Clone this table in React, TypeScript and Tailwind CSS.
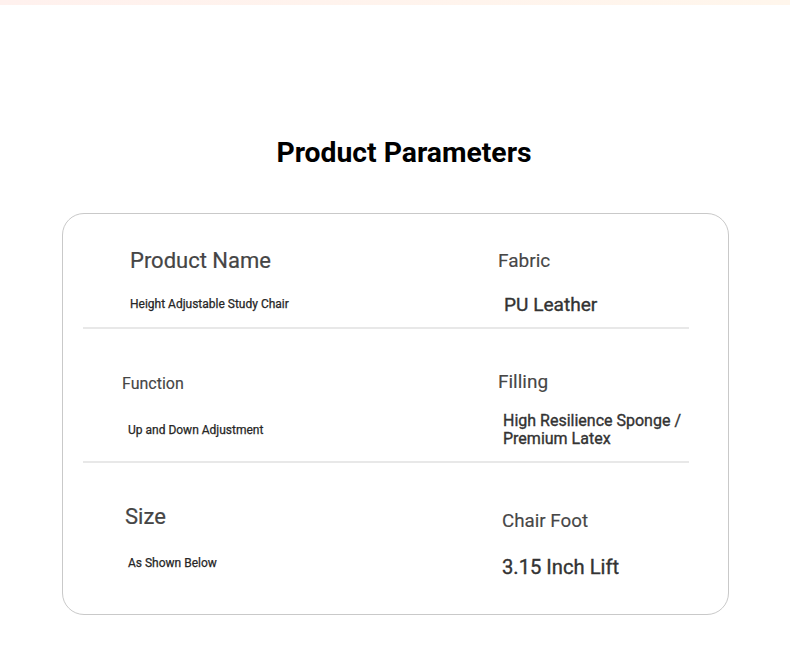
const App = () => {
    return (
        <div className="w-[790px] h-[649px] bg-white overflow-hidden font-['Roboto',_'Liberation_Sans',_sans-serif]">
            {/* faixa no topo */}
            <div className="h-[5px] w-full bg-gradient-to-r from-[#fff1ee] to-[#fff6ec]" />

            <h1 className="mt-[134px] text-center text-[28.3px] leading-[28px] font-bold text-black pl-[18px]">
                Product Parameters
            </h1>

            <div className="mt-[46px] ml-[62px] w-[667px] h-[402px] border border-[#c9c9c9] rounded-[22px] pl-[20px] flex flex-col">

                {/* linha 1 */}
                <div className="h-[113px] grid grid-cols-[415px_1fr]">
                    <div className="flex flex-col items-start">
                        <p className="mt-[36px] ml-[47px] text-[22px] leading-none text-[#454545] [-webkit-text-stroke:0.2px_#454545]">Product Name</p>
                        <p className="mt-[26px] ml-[47px] text-[12px] leading-none text-[#262626] [-webkit-text-stroke:0.25px_#262626]">Height Adjustable Study Chair</p>
                    </div>
                    <div className="flex flex-col items-start">
                        <p className="mt-[37px] ml-0 text-[19px] leading-none text-[#474747] [-webkit-text-stroke:0.15px_#474747]">Fabric</p>
                        <p className="mt-[25px] ml-[6px] text-[19.1px] leading-none text-[#333] [-webkit-text-stroke:0.35px_#333]">PU Leather</p>
                    </div>
                </div>
                <div className="h-[2px] w-[606px] bg-[#e8e8e8]" />

                {/* linha 2 */}
                <div className="h-[132px] grid grid-cols-[415px_1fr]">
                    <div className="flex flex-col items-start">
                        <p className="mt-[47px] ml-[39px] text-[16px] leading-none text-[#454545] [-webkit-text-stroke:0.15px_#454545]">Function</p>
                        <p className="mt-[31.5px] ml-[45px] text-[12px] leading-none text-[#262626] [-webkit-text-stroke:0.25px_#262626]">Up and Down Adjustment</p>
                    </div>
                    <div className="flex flex-col items-start">
                        <p className="mt-[43px] ml-0 text-[19px] leading-none text-[#474747] [-webkit-text-stroke:0.15px_#474747]">Filling</p>
                        <p className="mt-[21px] ml-[5px] text-[16px] leading-[18px] text-[#333] [-webkit-text-stroke:0.35px_#333]">
                            High Resilience Sponge /<br />Premium Latex
                        </p>
                    </div>
                </div>
                <div className="h-[2px] w-[606px] bg-[#e8e8e8]" />

                {/* linha 3 */}
                <div className="flex-1 grid grid-cols-[415px_1fr]">
                    <div className="flex flex-col items-start">
                        <p className="mt-[43px] ml-[42px] text-[22px] leading-none text-[#454545] [-webkit-text-stroke:0.2px_#454545]">Size</p>
                        <p className="mt-[28.5px] ml-[45px] text-[12px] leading-none text-[#262626] [-webkit-text-stroke:0.25px_#262626]">As Shown Below</p>
                    </div>
                    <div className="flex flex-col items-start">
                        <p className="mt-[49px] ml-[4px] text-[18.8px] leading-none text-[#474747] [-webkit-text-stroke:0.15px_#474747]">Chair Foot</p>
                        <p className="mt-[26px] ml-[4px] text-[20.2px] leading-none text-[#333] [-webkit-text-stroke:0.35px_#333]">3.15 Inch Lift</p>
                    </div>
                </div>
            </div>
        </div>
    );
}

export default App;
